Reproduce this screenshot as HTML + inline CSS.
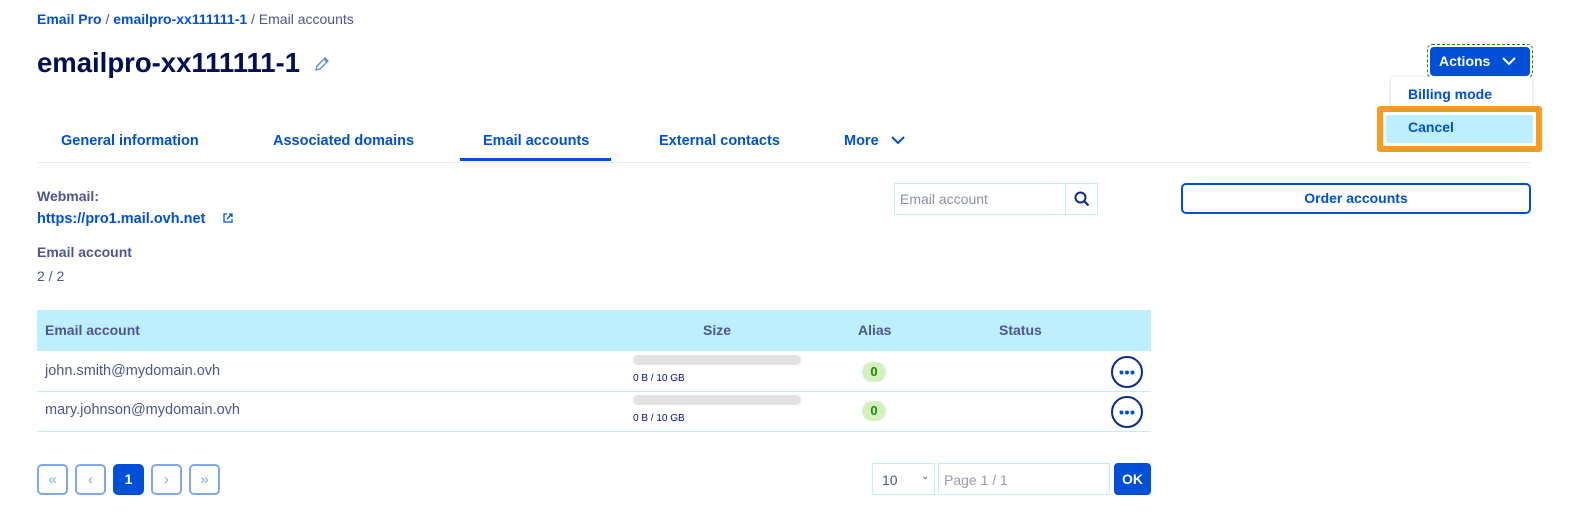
<!DOCTYPE html>
<html><head><style>
*{box-sizing:border-box;margin:0;padding:0}
body{width:1578px;height:527px;background:#fff;font-family:"Liberation Sans",sans-serif;position:relative;overflow:hidden;color:#4d5592}
.a{position:absolute;white-space:nowrap}
.b{font-weight:bold}
.blue{color:#0050d7}
.tab{font-size:14.5px;font-weight:bold;color:#0050d7;top:133px}
.pg{position:absolute;top:464px;width:31px;height:31px;border:2px solid #7fa7ea;border-radius:5px;color:#7fa7ea;text-align:center;line-height:27px;font-size:15px}
.bar{position:absolute;left:633px;width:168px;height:10px;border-radius:5px;background:#e3e3e3}
.sz{font-size:10px;color:#000e9c;left:633px}
.badge{position:absolute;left:862px;width:24px;height:20px;border-radius:10px;background:#d5f0bf;color:#1a8a00;font-weight:bold;font-size:13px;text-align:center;line-height:20px}
.dots{position:absolute;left:1111px;width:32px;height:32px;border-radius:50%;border:2px solid #0a2a8c}
.dots svg{position:absolute;left:6px;top:12px}
</style></head><body>
<div class="a b blue" style="left:37px;top:11px;font-size:14px">Email Pro <span style="color:#4d5592;font-weight:normal">/</span> emailpro-xx111111-1 <span style="color:#4d5592;font-weight:normal">/ Email accounts</span></div>
<div class="a b" style="left:37px;top:47px;font-size:27.5px;color:#000e54">emailpro-xx111111-1</div>
<svg class="a" style="left:313px;top:55px" width="18" height="18" viewBox="0 0 18 18"><path d="M3 15l1-4 8-8 3 3-8 8z M11 4l3 3" fill="none" stroke="#5b86e0" stroke-width="1.3"/></svg>
<div class="a" style="left:1427px;top:44px;width:106px;height:34px;border:1.5px dashed #2b7a14;border-radius:5px"></div>
<div class="a b" style="left:1430px;top:47px;width:100px;height:29px;background:#0050d7;border-radius:4px;color:#fff;font-size:14px;line-height:29px;padding-left:9px">Actions <svg style="position:absolute;left:72px;top:9px" width="14" height="10"><path d="M1 2l6 6 6-6" fill="none" stroke="#fff" stroke-width="2"/></svg></div>
<div class="a" style="left:1391px;top:77px;width:141px;height:70px;background:#fff;box-shadow:0 1px 4px rgba(0,0,0,.2);border-radius:4px"></div>
<div class="a b blue" style="left:1408px;top:86px;font-size:14px">Billing mode</div>
<div class="a" style="left:1377px;top:106px;width:165px;height:46px;border:6px solid #ff9a1e;border-radius:3px;background:#bdefff;box-shadow:inset 0 0 0 3px #fff"></div>
<div class="a b blue" style="left:1408px;top:119px;font-size:14px">Cancel</div>
<div class="a tab" style="left:61px">General information</div>
<div class="a tab" style="left:273px">Associated domains</div>
<div class="a tab" style="left:483px">Email accounts</div>
<div class="a tab" style="left:659px">External contacts</div>
<div class="a tab" style="left:844px">More</div>
<svg class="a" style="left:890px;top:135px" width="16" height="12"><path d="M2 2l6 6 6-6" fill="none" stroke="#0050d7" stroke-width="2"/></svg>
<div class="a" style="left:37px;top:162px;width:1494px;height:1px;background:#e6eef8"></div>
<div class="a" style="left:460px;top:158px;width:151px;height:3px;background:#0050d7"></div>
<div class="a b" style="left:37px;top:188px;font-size:14px">Webmail:</div>
<div class="a b blue" style="left:37px;top:211px;font-size:14.5px">https://pro1.mail.ovh.net</div>
<svg class="a" style="left:222px;top:212px" width="12" height="12"><path d="M5 2H2v8h8V7M7 2h3v3M10 2L5 7" fill="none" stroke="#0050d7" stroke-width="1.3"/></svg>
<div class="a b" style="left:37px;top:244px;font-size:14px">Email account</div>
<div class="a" style="left:37px;top:268px;font-size:14px">2 / 2</div>
<div class="a" style="left:894px;top:183px;width:204px;height:32px;border:1px solid #bdefff"></div>
<div class="a" style="left:900px;top:191px;font-size:14px;color:#8a8fae">Email account</div>
<div class="a" style="left:1065px;top:184px;width:1px;height:30px;background:#bdefff"></div>
<svg class="a" style="left:1074px;top:191px" width="16" height="16"><circle cx="6.5" cy="6.5" r="5" fill="none" stroke="#0a2a8c" stroke-width="2"/><path d="M10 10l4.5 4.5" stroke="#0a2a8c" stroke-width="2.2"/></svg>
<div class="a b blue" style="left:1181px;top:183px;width:350px;height:31px;border:2px solid #0050d7;border-radius:5px;text-align:center;line-height:27px;font-size:14px">Order accounts</div>
<div class="a" style="left:37px;top:310px;width:1114px;height:41px;background:#bdefff"></div>
<div class="a b" style="left:45px;top:322px;font-size:14px">Email account</div>
<div class="a b" style="left:703px;top:322px;font-size:14px">Size</div>
<div class="a b" style="left:858px;top:322px;font-size:14px">Alias</div>
<div class="a b" style="left:999px;top:322px;font-size:14px">Status</div>
<div class="a" style="left:45px;top:363px;font-size:14.5px">john.smith@mydomain.ovh</div>
<div class="bar" style="top:355px"></div><div class="a sz" style="top:373px">0 B / 10 GB</div>
<div class="badge" style="top:362px">0</div><div class="dots" style="top:356px"><svg width="16" height="5"><circle cx="2.5" cy="2.5" r="2" fill="#0050d7"/><circle cx="8" cy="2.5" r="2" fill="#0050d7"/><circle cx="13.5" cy="2.5" r="2" fill="#0050d7"/></svg></div>
<div class="a" style="left:37px;top:391px;width:1114px;height:1px;background:#bdefff"></div>
<div class="a" style="left:45px;top:402px;font-size:14.5px">mary.johnson@mydomain.ovh</div>
<div class="bar" style="top:395px"></div><div class="a sz" style="top:413px">0 B / 10 GB</div>
<div class="badge" style="top:401px">0</div><div class="dots" style="top:396px"><svg width="16" height="5"><circle cx="2.5" cy="2.5" r="2" fill="#0050d7"/><circle cx="8" cy="2.5" r="2" fill="#0050d7"/><circle cx="13.5" cy="2.5" r="2" fill="#0050d7"/></svg></div>
<div class="a" style="left:37px;top:431px;width:1114px;height:1px;background:#bdefff"></div>
<div class="pg" style="left:37px">«</div><div class="pg" style="left:75px">‹</div>
<div class="pg b" style="left:113px;background:#0050d7;border-color:#0050d7;color:#fff;font-size:14px">1</div>
<div class="pg" style="left:151px">›</div><div class="pg" style="left:189px">»</div>
<div class="a" style="left:872px;top:463px;width:63px;height:32px;border:1px solid #bdefff;font-size:14px;padding:8px 0 0 9px">10<span style="position:absolute;left:48px;top:7px;font-size:10px">⌄</span></div>
<div class="a" style="left:938px;top:463px;width:172px;height:32px;border:1px solid #bdefff;font-size:14px;color:#9a9ab0;padding:8px 0 0 5px">Page 1 / 1</div>
<div class="a b" style="left:1114px;top:463px;width:37px;height:32px;background:#0050d7;border-radius:4px;color:#fff;text-align:center;line-height:32px;font-size:14px">OK</div>
</body></html>
